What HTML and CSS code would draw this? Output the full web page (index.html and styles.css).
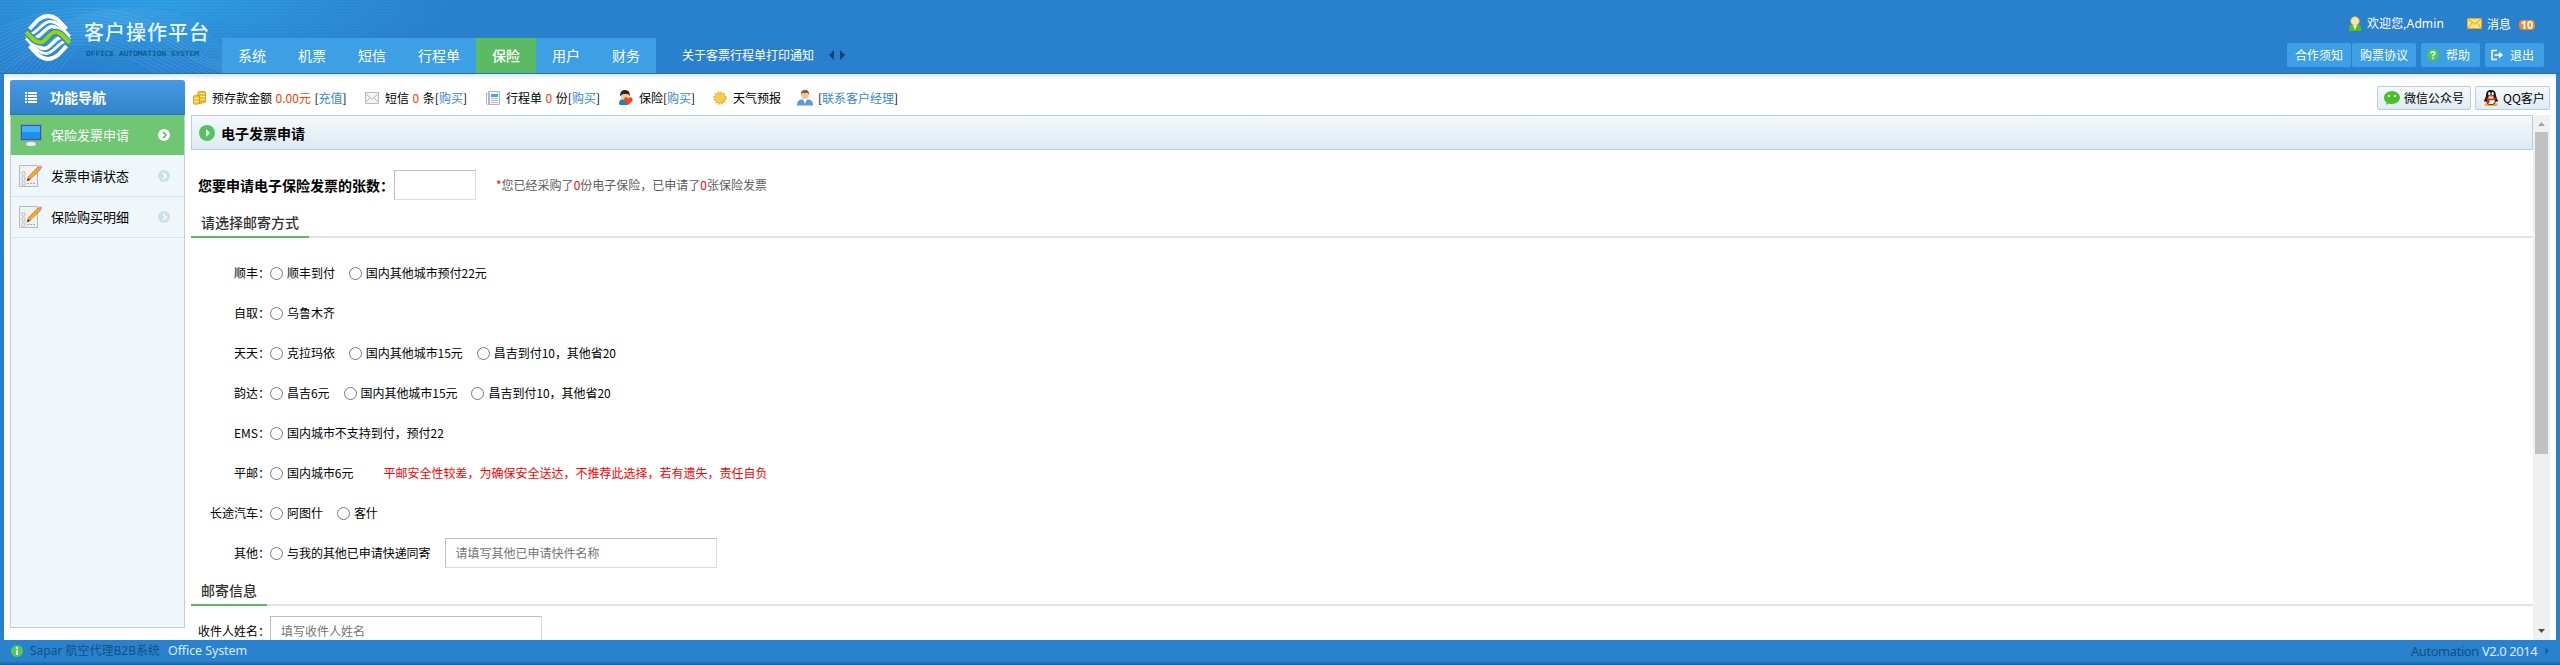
FILE: index.html
```html
<!DOCTYPE html>
<html lang="zh-CN">
<head>
<meta charset="utf-8">
<title>客户操作平台</title>
<link rel="stylesheet" href="styles.css">
</head>
<body>
<header class="header">
  <svg class="waves" width="300" height="73" viewBox="0 0 300 73" id="waves"></svg>
  <div class="brand">
    <svg width="46" height="47" viewBox="0 0 46 47">
      <g id="half" fill="none" stroke="#fff">
        <path d="M4.500 15L13 6Q18 2 23 2T33 6L41.500 15" stroke-width="4"/>
        <path d="M4 20.500C12 20 17 7.500 25 7.500S36 14 45 22.500" stroke-width="3"/>
        <path d="M10 24C17 22 21 12.500 27 12.500S37 20 46 27" stroke-width="3.500"/>
      </g>
      <g fill="none" stroke="#fff" transform="rotate(180 23 23.500)">
        <path d="M4.500 15L13 6Q18 2 23 2T33 6L41.500 15" stroke-width="4"/>
        <path d="M4 20.500C12 20 17 7.500 25 7.500S36 14 45 22.500" stroke-width="3"/>
        <path d="M10 24C17 22 21 12.500 27 12.500S37 20 46 27" stroke-width="3.500"/>
      </g>
      <path d="M0 17c7 7 10 11.500 15.500 11.500S24 18 30.500 18 39 25 46 30" fill="none" stroke="#2b86d2" stroke-width="6.500"/>
      <path d="M1 18c6 6 9 10.500 14.500 10.500S24 18 30.500 18 39 24 45 29" fill="none" stroke="#94d60a" stroke-width="4"/>
    </svg>
    <div class="brand-text">
      <div class="brand-name">客户操作平台</div>
      <svg class="brand-sub" width="116" height="10" viewBox="0 0 116 10"><text x="1" y="7" textLength="113" lengthAdjust="spacingAndGlyphs">OFFICE AUTOMATION SYSTEM</text></svg>
    </div>
  </div>
  <nav class="nav"><a>系统</a><a>机票</a><a>短信</a><a>行程单</a><a class="on">保险</a><a>用户</a><a>财务</a></nav>
  <div class="notice"><span>关于客票行程单打印通知</span>
    <svg width="16" height="10" viewBox="0 0 16 10"><path d="M5 0v10L0 5zM11 0v10l5-5z" fill="#0c4378"/></svg>
  </div>
  <div class="account">
    <div class="user-line">
      <svg width="12" height="16" viewBox="0 0 12 16"><path d="M0 15v-3c0-2 2-4 4-4h4c2 0 4 2 4 4v3z" fill="#4fc01c"/><path d="M3.500 8h5L6 14z" fill="#fff"/><circle cx="6" cy="5" r="4.300" fill="#fbe3ae" stroke="#e2a93c" stroke-width=".7"/></svg>
      <span class="hello">欢迎您,Admin</span>
      <svg width="15" height="11" viewBox="0 0 15 11"><path d="M.5.5h14v10H.5z" fill="#ffe480" stroke="#f0a81c"/><path d="M1 1l6.500 5L14 1M1 10l4-5M14 10l-4-5" fill="none" stroke="#e79a17"/></svg>
      <span class="msg">消息</span><span class="badge">10</span>
    </div>
    <div class="buttons">
      <a class="plain">合作须知</a><a class="plain">购票协议</a>
      <a class="icon-btn"><svg width="12" height="12" viewBox="0 0 12 12"><circle cx="6" cy="6" r="6" fill="#4fc659"/><path d="M4 4.500Q4 2.700 6 2.700T8 4.300Q8 5.500 6 6.300V7.500M6 8.500V10" fill="none" stroke="#fff" stroke-width="1.400"/></svg>帮助</a>
      <a class="icon-btn"><svg width="12" height="12" viewBox="0 0 12 12"><path d="M6 1.500H1v9h5M3.500 6H8" fill="none" stroke="#fff" stroke-width="1.500"/><path d="M8 2.500L12 6 8 9.500z" fill="#fff"/></svg>退出</a>
    </div>
  </div>
</header>

<div class="body">
  <aside class="side">
    <h2><svg width="12" height="11" viewBox="0 0 12 11"><path d="M0 0h2v2H0zM3 0h9v2H3zM0 3h2v2H0zM3 3h9v2H3zM0 6h2v2H0zM3 6h9v2H3zM0 9h2v2H0zM3 9h9v2H3z" fill="#fff"/></svg>功能导航</h2>
    <a class="item on"><svg class="ico" width="24" height="24" viewBox="0 0 24 24"><path d="M1.500 1.500h21v16h-21z" fill="#35618c" stroke="#8696a2"/><path d="M3 3h18v13H3z" fill="#1d8fee"/><path d="M3 3h18v6H3z" fill="#45b3fa"/><path d="M9 18h6v2H9z" fill="#a9b4ba"/><ellipse cx="12" cy="21" rx="5" ry="2" fill="#e8eeee"/></svg><span>保险发票申请</span><svg width="12" height="12" viewBox="0 0 12 12"><circle cx="6" cy="6" r="6" fill="#fff"/><path d="M5 3l3 3-3 3" fill="none" stroke="#5eb364" stroke-width="1.500"/></svg></a>
    <a class="item"><svg class="ico" width="24" height="24" viewBox="0 0 24 24"><path d="M.5 1.500h18v21H.5z" fill="#f1f1f1" stroke="#b8b8b8"/><path d="M3 8h3v3H3zM3 13h3v3H3zM3 18h3v3H3z" fill="#fff" stroke="#bbb"/><path d="M8 15.500h4M8 19.500h8" stroke="#aaa" stroke-dasharray="2 1"/><path d="M8 17l1.500-4.500L19 3l2.500 2.500-9.500 9z" fill="#f5a72c" stroke="#b87312" stroke-width=".6"/><path d="M8 17l1-3 2 2z" fill="#333"/><path d="M19 3l2-2 2.500 2-2 2.500z" fill="#d792c8"/></svg><span>发票申请状态</span><svg width="12" height="12" viewBox="0 0 12 12"><circle cx="6" cy="6" r="6" fill="#cde0ea"/><path d="M5 3l3 3-3 3" fill="none" stroke="#fff" stroke-width="1.500"/></svg></a>
    <a class="item"><svg class="ico" width="24" height="24" viewBox="0 0 24 24"><path d="M.5 1.500h18v21H.5z" fill="#f1f1f1" stroke="#b8b8b8"/><path d="M3 8h3v3H3zM3 13h3v3H3zM3 18h3v3H3z" fill="#fff" stroke="#bbb"/><path d="M8 15.500h4M8 19.500h8" stroke="#aaa" stroke-dasharray="2 1"/><path d="M8 17l1.500-4.500L19 3l2.500 2.500-9.500 9z" fill="#f5a72c" stroke="#b87312" stroke-width=".6"/><path d="M8 17l1-3 2 2z" fill="#333"/><path d="M19 3l2-2 2.500 2-2 2.500z" fill="#d792c8"/></svg><span>保险购买明细</span><svg width="12" height="12" viewBox="0 0 12 12"><circle cx="6" cy="6" r="6" fill="#cde0ea"/><path d="M5 3l3 3-3 3" fill="none" stroke="#fff" stroke-width="1.500"/></svg></a>
  </aside>

  <main class="main">
    <div class="toolbar">
      <div class="tool t-coin"><svg width="13" height="14" viewBox="0 0 13 14"><path d="M5 1l6-1 1.500 1v10l-5 1.500-2.500-1z" fill="#f6b51c" stroke="#d58a08" stroke-width=".7"/><path d="M.5 5l4-1 2 1v7.500l-4 1-2-1z" fill="#f9c533" stroke="#d58a08" stroke-width=".7"/><path d="M6 2.500h6M7 5.500h5M7 8.500h5M1 7.500h5M1 10.500h5" stroke="#fff0a0"/></svg><span>预存款金额 <b>0.00元</b> [<i>充值</i>]</span></div>
      <div class="tool t-sms"><svg width="14" height="12" viewBox="0 0 14 12"><path d="M.5.5h13v11H.5z" fill="#f5f5f5" stroke="#bbb"/><path d="M1 2l6 5 6-5M1 10l4-4M13 10L9 6" fill="none" stroke="#bbb"/></svg><span>短信 <b>0</b> 条[<i>购买</i>]</span></div>
      <div class="tool t-trip"><svg width="14" height="14" viewBox="0 0 14 14"><path d="M.5 2.500h3v11h-2l-1-1zM2.500.5h11v13h-11z" fill="#f7f7f7" stroke="#b5b5b5"/><path d="M5 3h7v3H5z" fill="#38b2dd"/><path d="M5 7.500h7M5 9.500h7M5 11.500h7" stroke="#bbb"/></svg><span>行程单 <b>0</b> 份[<i>购买</i>]</span></div>
      <div class="tool t-ins"><svg width="15" height="15" viewBox="0 0 15 15"><path d="M0 14c0-4 2-5 5-5h4v6H1z" fill="#2c7fc4"/><circle cx="6" cy="6" r="4" fill="#f7c79c"/><path d="M1 6C1 2 3 0 6 0c4 0 5 3 5 6L9 4 4 4z" fill="#33231d"/><path d="M9 15L5.500 11C4 8 7.500 6 9 8.500 11 6 14.500 8 13.500 11z" fill="#ee4a1a"/></svg><span>保险[<i>购买</i>]</span></div>
      <div class="tool t-sun"><svg width="14" height="14" viewBox="0 0 14 14"><circle cx="7" cy="7" r="5.800" fill="none" stroke="#e9b52d" stroke-width="2" stroke-dasharray="1.500 1.530"/><circle cx="7" cy="7" r="5" fill="#f8cc48" stroke="#e4a82a" stroke-width=".7"/></svg><span>天气预报</span></div>
      <div class="tool t-mgr"><svg width="16" height="16" viewBox="0 0 16 16"><path d="M0 15.500c0-4 2-6 5-6h6c3 0 5 2 5 6z" fill="#5a9bd6"/><path d="M6 9h4l-2 5z" fill="#fff"/><circle cx="8" cy="5.300" r="3.700" fill="#f3c295"/><path d="M4 5c-.5-3 1-5 4-5s4.500 2 4 5l-1-2H5z" fill="#8a5a35"/></svg><span>[<i>联系客户经理</i>]</span></div>
      <a class="ext wx"><svg width="16" height="14" viewBox="0 0 16 14"><path d="M8 0c4.500 0 8 3 8 6.500S12.500 13 8 13c-1.500 0-2.500 0-3.500-.5L2 14l.5-2.500C1 10.500 0 8.500 0 6.500 0 3 3.500 0 8 0z" fill="#4cbf2e"/><circle cx="5" cy="5" r="1.100" fill="#fff"/><circle cx="11" cy="5" r="1.100" fill="#fff"/></svg>微信公众号</a>
      <a class="ext qq"><svg width="16" height="16" viewBox="0 0 16 16"><ellipse cx="5" cy="14.500" rx="3.500" ry="1.500" fill="#f7a51c"/><ellipse cx="11" cy="14.500" rx="3.500" ry="1.500" fill="#f7a51c"/><path d="M8 0c3.500 0 5 2 5 6l2 5-1 1-1-1c-1 3-3 4-5 4s-4-1-5-4l-1 1-1-1 2-5c0-4 1.500-6 5-6z" fill="#16161c"/><ellipse cx="8" cy="10.500" rx="3.800" ry="3.800" fill="#fff"/><path d="M2.500 7c4 2 7 2 11 0v2c-2 1-5 1.500-7 1.300V13H4V9z" fill="#e8201d"/><ellipse cx="6.300" cy="3.500" rx="1.200" ry="1.500" fill="#fff"/><ellipse cx="9.700" cy="3.500" rx="1.200" ry="1.500" fill="#fff"/><ellipse cx="8" cy="6.200" rx="3" ry="1" fill="#f7a51c"/></svg>QQ客户</a>
    </div>
    <div class="frame">
      <div class="content">
        <h3 class="title"><svg width="16" height="16" viewBox="0 0 16 16"><circle cx="8" cy="8" r="8" fill="#53c45d"/><path d="M7 4l4 4-4 4z" fill="#fff"/></svg>电子发票申请</h3>
        <div class="count"><label>您要申请电子保险发票的张数：</label><input class="small"><span class="note"><em>*</em>您已经采购了<em>0</em>份电子保险，已申请了<em>0</em>张保险发票</span></div>
        <div class="section"><h4>请选择邮寄方式</h4></div>
        <div class="rows">
          <div class="row"><label>顺丰：</label><span class="opt"><input type="radio">顺丰到付</span><span class="opt"><input type="radio">国内其他城市预付22元</span></div>
          <div class="row"><label>自取：</label><span class="opt"><input type="radio">乌鲁木齐</span></div>
          <div class="row"><label>天天：</label><span class="opt"><input type="radio">克拉玛依</span><span class="opt"><input type="radio">国内其他城市15元</span><span class="opt"><input type="radio">昌吉到付10，其他省20</span></div>
          <div class="row"><label>韵达：</label><span class="opt"><input type="radio">昌吉6元</span><span class="opt"><input type="radio">国内其他城市15元</span><span class="opt"><input type="radio">昌吉到付10，其他省20</span></div>
          <div class="row"><label>EMS：</label><span class="opt"><input type="radio">国内城市不支持到付，预付22</span></div>
          <div class="row"><label>平邮：</label><span class="opt"><input type="radio">国内城市6元</span><span class="warn">平邮安全性较差，为确保安全送达，不推荐此选择，若有遗失，责任自负</span></div>
          <div class="row"><label>长途汽车：</label><span class="opt"><input type="radio">阿图什</span><span class="opt"><input type="radio">客什</span></div>
          <div class="row"><label>其他：</label><span class="opt"><input type="radio">与我的其他已申请快递同寄</span><input class="wide" placeholder="请填写其他已申请快件名称"></div>
        </div>
        <div class="section second"><h4>邮寄信息</h4></div>
        <div class="row name"><label>收件人姓名：</label><input class="wide" placeholder="填写收件人姓名"></div>
      </div>
      <div class="scroll">
        <svg width="17" height="17" viewBox="0 0 17 17"><path d="M5 11h7L8.500 7z" fill="#a3a3a3"/></svg>
        <div class="thumb"></div>
        <svg class="down" width="17" height="17" viewBox="0 0 17 17"><path d="M5 6h7l-3.500 4z" fill="#505050"/></svg>
      </div>
    </div>
  </main>
</div>

<footer class="footer">
  <svg width="12" height="12" viewBox="0 0 12 12"><circle cx="6" cy="6" r="6" fill="#56c75f"/><path d="M5 2h2v2H5zM5 5h2v5H5z" fill="#fff"/></svg>
  <span class="sys">Sapar 航空代理B2B系统</span><span class="lite office">Office System</span>
  <span class="auto">Automation</span><span class="lite ver">V2.0 2014</span>
  <svg class="arrow" width="4" height="8" viewBox="0 0 4 8"><path d="M0 0l4 4-4 4z" fill="#1763a8"/></svg>
</footer>
<script src="waves.js"></script>
</body>
</html>
```
FILE: styles.css
```css
* { box-sizing: border-box; }
html { height: 665px; overflow: hidden; }
body { margin: 0; width: 2560px; height: 665px; overflow: hidden; display: flex; flex-direction: column; background: #2a82cf; font: 12px/18px "Noto Sans CJK SC", "Noto Sans", sans-serif; color: #000; }
svg { display: block; flex: none; }
span, a, label { white-space: nowrap; }

.header { position: relative; flex: none; height: 74px; display: flex; border-bottom: 1px solid #2371b5; background: repeating-linear-gradient(0deg, rgba(0,30,90,.035) 0 1px, transparent 1px 3px), radial-gradient(ellipse 290px 75px at 160px 0, #2f9fe4, rgba(47,159,228,0)), #2a82cf; color: #fff; }
.waves { position: absolute; left: 0; top: 0; }
.brand { width: 222px; padding: 14px 0 0 25px; display: flex; gap: 13px; position: relative; }
.brand-text { padding-top: 6px; }
.brand-name { font-size: 20px; line-height: 24px; font-weight: 500; letter-spacing: 1px; color: #e4f5ff; white-space: nowrap; }
.brand-sub { margin: 5px 0 0 1px; }
.brand-sub text { font: 7px "DejaVu Sans Mono", monospace; fill: #11558c; stroke: #11558c; stroke-width: .2px; }
.nav { display: flex; margin-top: 38px; height: 35px; background: #3d9fe4; position: relative; }
.nav a { padding: 0 16px; font-size: 14px; line-height: 35px; }
.nav .on { background: #5bbb62; font-weight: 500; }
.notice { display: flex; align-items: center; gap: 15px; margin: 38px 0 0 26px; height: 34px; }
.account { margin-left: auto; width: 273px; }
.user-line { height: 43px; padding: 4px 0 0 62px; display: flex; align-items: center; }
.hello { margin-left: 6px; width: 78px; margin-right: 22px; font-family: "Noto Sans", "Noto Sans CJK SC", sans-serif; letter-spacing: .1px; }
.msg { margin: 0 8px 0 5px; }
.badge { width: 16px; height: 10px; margin-top: 2px; border-radius: 4px; background: #f0842a; font: bold 11px/10px "Noto Sans", sans-serif; text-align: center; }
.buttons { display: flex; }
.buttons a { height: 24px; line-height: 24px; border-radius: 2px; background: #3d9fe4; }
.plain { width: 64px; margin-right: 1px; padding-left: 8px; }
.icon-btn { width: 59px; margin: 0 1px 0 4px; padding-left: 6px; display: flex; align-items: center; gap: 7px; }

.body { flex: none; height: 566px; margin: 0 4px; padding: 6px 6px 0; display: flex; gap: 6px; background: linear-gradient(#dce9f4, #fff 6px); }
.side { width: 175px; height: 548px; border: 1px solid #bcd0de; border-top: 0; border-radius: 3px 3px 0 0; background: #f0f7fb; }
.side h2 { margin: 0 -1px; height: 35px; padding-left: 15px; display: flex; align-items: center; gap: 13px; border-radius: 3px 3px 0 0; border-bottom: 1px solid #2c76bd; background: linear-gradient(#4699e2, #3484cb); font-size: 14px; color: #fff; }
.item { height: 41px; padding: 0 14px 0 8px; border-bottom: 1px solid #d5e5ef; display: flex; align-items: center; font-size: 13px; }
.item span { flex: 1; margin-left: 8px; }
.item.on { background: #6fc673; color: #fff; border-bottom-color: #e5f2ee; }

.main { flex: 1; display: flex; flex-direction: column; }
.toolbar { flex: none; height: 35px; display: flex; align-items: center; }
.tool { display: flex; align-items: center; gap: 6px; height: 35px; word-spacing: .9px; }
.tool b { font-weight: 400; color: #ff3c00; }
.tool i { font-style: normal; color: #3a87d0; }
.t-coin { margin-left: 2px; width: 172px; }
.t-sms { width: 121px; }
.t-trip { width: 133px; }
.t-ins { width: 94px; }
.t-ins svg { margin-right: -1px; }
.t-sun { width: 84px; }
.t-mgr svg { margin-right: -1px; }
.ext { height: 24px; border: 1px solid #b9cfde; border-radius: 2px; background: linear-gradient(#f5f9fc, #dfebf4); display: flex; align-items: center; gap: 4px; padding-left: 6px; }
.wx { margin-left: auto; width: 94px; }
.qq { margin-left: 4px; width: 75px; padding-left: 7px; }
.frame { flex: 1; min-height: 0; display: flex; }
.content { flex: 1; overflow: hidden; }
.title { margin: 0; height: 35px; padding-left: 7px; display: flex; align-items: center; gap: 6px; border: 1px solid #b9cfde; background: linear-gradient(#f5f9fc, #dceaf3); font-size: 14px; }
.count { display: flex; align-items: center; height: 30px; margin: 20px 0 0 7px; }
.count label { width: 196px; font-size: 14px; font-weight: 700; }
input { font: inherit; color: #000; }
.small, .wide { height: 30px; border: 1px solid #dcdcdc; border-top-color: #bebebe; border-left-color: #bebebe; background: #fff; padding: 0 10px 2px; outline: 0; }
.small { width: 82px; }
.wide { width: 272px; }
.wide::placeholder { color: #757575; }
.note { margin-left: 20px; color: #5c5c5c; }
.note em, .warn { font-style: normal; color: #f00; }
.section { height: 38px; border-bottom: 2px solid #e3e3e3; display: flex; align-items: flex-end; }
.section h4 { margin: 0 0 -2px; height: 31px; padding: 0 10px; font-size: 14px; line-height: 30px; font-weight: 500; color: #333; border-bottom: 2px solid #5bbb62; }
.rows { padding-top: 15px; }
.row { height: 40px; display: flex; align-items: center; }
.row label { width: 79px; text-align: right; }
.opt { display: flex; align-items: center; margin-right: 14px; letter-spacing: -.04px; }
.opt input { width: 13px; height: 13px; margin: 0 4px 0 0; }
.warn { margin-left: 16px; }
.second { height: 33px; }
.name { margin-top: 5px; }
.scroll { width: 17px; background: #f0f0f0; display: flex; flex-direction: column; }
.thumb { width: 13px; height: 322px; margin-left: 2px; background: #c1c1c1; }
.down { margin-top: auto; }

.footer { flex: none; height: 25px; display: flex; align-items: center; padding: 0 11px 3px; background: linear-gradient(#2a82cf 21px, #1a5c9c 25px); font: 13px/20px "Noto Sans", "Noto Sans CJK SC", sans-serif; color: #11507f; }
.sys { margin-left: 7px; width: 138px; font-size: 12px; }
.office { font-size: 12.500px; letter-spacing: -.1px; }
.lite { color: #d5ecfb; }
.auto { margin-left: auto; width: 71px; letter-spacing: -.45px; }
.ver { width: 63px; letter-spacing: -.45px; }
```
FILE: waves.js
```js
// Fine curved lines behind the logo.
const waves = document.getElementById('waves');
let lines = '';
for (let i = 0; i < 12; i++) {
  lines += `<path d="M0 ${28 + i * 4}C50 ${6 + i * 3} 90 ${4 + i * 3} 130 ${14 + i * 4}S190 ${60 + i * 3} 250 ${74 + i * 2}"/>`;
  lines += `<path d="M${i * 5} 76C${50 + i * 4} 20 ${90 + i * 3} ${4 + i} 150 ${10 + i * 2}S210 ${42 + i * 3} 250 76"/>`;
}
waves.innerHTML = `<g fill="none" stroke="#8fd0f5" stroke-opacity=".22" stroke-width=".8">${lines}</g>`;
```
